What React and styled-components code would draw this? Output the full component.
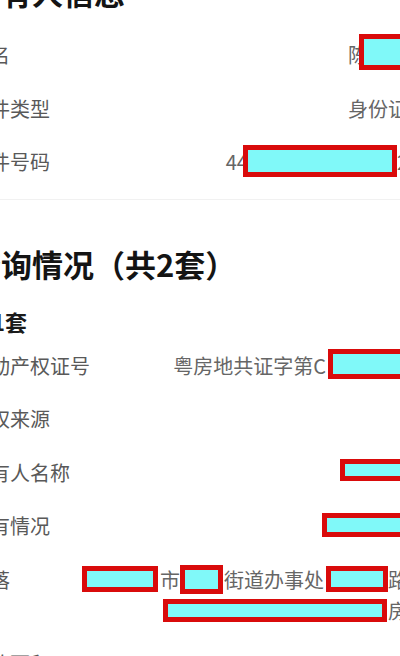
import React from "react";
import styled, { createGlobalStyle } from "styled-components";

const GlobalStyle = createGlobalStyle`
  html, body {
    margin: 0;
    padding: 0;
    background: #fff;
    overflow: hidden;
  }
  body {
    font-family: "Noto Sans CJK SC", "Noto Sans", sans-serif;
  }
`;

const Page = styled.div`
  margin-left: -30px;
  width: 438px;
`;

const Section = styled.section`
  padding: 0 20px ${(p) => p.$pb || 0}px;
  margin: 0 -20px;
  border-bottom: 1px solid #f1f1f1;
`;

const Title = styled.h2`
  margin: ${(p) => p.$mt}px 0 ${(p) => p.$mb}px;
  font-size: 31px;
  line-height: 40px;
  font-weight: 700;
  color: #141414;
  white-space: nowrap;
`;

const SubTitle = styled.h3`
  margin: 22px 0 3px;
  font-size: 22px;
  line-height: 30px;
  font-weight: 700;
  color: #1a1a1a;
`;

const Row = styled.div`
  display: flex;
  justify-content: space-between;
  align-items: flex-start;
  padding: 11px 0 11.5px;
  font-size: 20px;
  line-height: 31px;
`;

const Label = styled.span`
  flex-shrink: 0;
  color: #595959;
  white-space: nowrap;
`;

const Value = styled.div`
  display: flex;
  flex-direction: column;
  align-items: flex-end;
  color: #666;
`;

const Line = styled.span`
  display: flex;
  align-items: center;
  white-space: nowrap;
  height: 31px;
`;

// redaction box drawn over the original value
const Mark = styled.span`
  display: inline-block;
  box-sizing: border-box;
  width: ${(p) => p.$w}px;
  height: ${(p) => p.$h}px;
  margin-left: ${(p) => p.$ml || 0}px;
  margin-right: ${(p) => p.$mr || 0}px;
  margin-top: ${(p) => p.$dy || 0}px;
  border: 5px solid #d90b0b;
  background: #80f9f9;
  flex-shrink: 0;
`;

const App = () => {
  return (
    <>
      <GlobalStyle />
      <Page>
        <Section $pb={10}>
          <Title $mt={-28} $mb={16}>所有人信息</Title>
          <Row>
            <Label>姓名</Label>
            <Value>
              <Line>
                陈<Mark $w={49} $h={36} $ml={-9} $dy={-6} />
              </Line>
            </Value>
          </Row>
          <Row>
            <Label>证件类型</Label>
            <Value>
              <Line>身份证</Line>
            </Value>
          </Row>
          <Row>
            <Label>证件号码</Label>
            <Value>
              <Line>
                44<Mark $w={154} $h={32} $ml={-5} $dy={-2} />2
              </Line>
            </Value>
          </Row>
        </Section>

        <Title $mt={44} $mb={0}>查询情况（共2套）</Title>
        <SubTitle>第1套</SubTitle>
        <Row>
          <Label>不动产权证号</Label>
          <Value>
            <Line>
              粤房地共证字第C<Mark $w={80} $h={30} $ml={2} $dy={-2} />
            </Line>
          </Value>
        </Row>
        <Row>
          <Label>产权来源</Label>
          <Value>
            <Line />
          </Value>
        </Row>
        <Row>
          <Label>所有人名称</Label>
          <Value>
            <Line>
              <Mark $w={68} $h={22} $dy={-5} />
            </Line>
          </Value>
        </Row>
        <Row>
          <Label>共有情况</Label>
          <Value>
            <Line>
              <Mark $w={86} $h={24} $dy={-2} />
            </Line>
          </Value>
        </Row>
        <Row>
          <Label>坐落</Label>
          <Value>
            <Line>
              <Mark $w={76} $h={26} $mr={2} />市
              <Mark $w={43} $h={29} $mr={1} />街道办事处
              <Mark $w={62} $h={26} $ml={2} />路
            </Line>
            <Line>
              <Mark $w={224} $h={23} $mr={1} />房
            </Line>
          </Value>
        </Row>
        <Row>
          <Label>建筑面积</Label>
          <Value>
            <Line>96.5㎡</Line>
          </Value>
        </Row>
      </Page>
    </>
  );
};

export default App;
